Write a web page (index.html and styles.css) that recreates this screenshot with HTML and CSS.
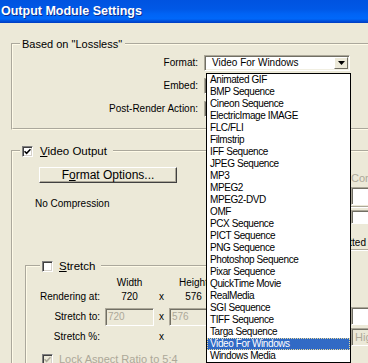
FILE: index.html
```html
<!DOCTYPE html>
<html lang="en">
<head>
<meta charset="utf-8">
<title>Output Module Settings</title>
<link rel="stylesheet" href="styles.css">
</head>
<body>
<div class="window">
  <div class="titlebar"><span class="title">Output Module Settings</span></div>
  <div class="client">
    <fieldset class="group group-based">
      <legend class="legend">Based on "Lossless"</legend>
      <div class="form-grid">
        <span class="lbl">Format:</span>
        <div class="combo-wrap">
          <div class="combo">
            <span class="combo-text">Video For Windows</span>
            <span class="combo-btn"><svg width="7" height="4" viewBox="0 0 7 4"><path d="M0 0H7L3.5 4Z" fill="#000"/></svg></span>
          </div>
          <ul class="droplist">
            <li>Animated GIF</li>
            <li>BMP Sequence</li>
            <li>Cineon Sequence</li>
            <li>ElectricImage IMAGE</li>
            <li>FLC/FLI</li>
            <li>Filmstrip</li>
            <li>IFF Sequence</li>
            <li>JPEG Sequence</li>
            <li>MP3</li>
            <li>MPEG2</li>
            <li>MPEG2-DVD</li>
            <li>OMF</li>
            <li>PCX Sequence</li>
            <li>PICT Sequence</li>
            <li>PNG Sequence</li>
            <li>Photoshop Sequence</li>
            <li>Pixar Sequence</li>
            <li>QuickTime Movie</li>
            <li>RealMedia</li>
            <li>SGI Sequence</li>
            <li>TIFF Sequence</li>
            <li>Targa Sequence</li>
            <li class="sel">Video For Windows</li>
            <li>Windows Media</li>
          </ul>
        </div>
        <span class="lbl">Embed:</span>
        <div class="combo"></div>
        <span class="lbl">Post-Render Action:</span>
        <div class="combo"></div>
      </div>
    </fieldset>

    <fieldset class="group group-video">
      <legend class="legend check-legend">
        <span class="check"><svg width="7" height="7" viewBox="0 0 7 7"><path d="M0.5 3.2L2.6 5.3L6.5 1.2" fill="none" stroke="#000" stroke-width="1.6"/></svg></span>
        <span><u>V</u>ideo Output</span>
      </legend>
      <div class="video-body">
        <div class="video-left">
          <button class="btn" type="button">F<u>o</u>rmat Options...</button>
          <div class="note">No Compression</div>
          <fieldset class="group group-stretch">
            <legend class="legend check-legend stretch-legend">
              <span class="check"></span>
              <span><u>S</u>tretch</span>
            </legend>
            <div class="stretch-grid">
              <span></span><span class="hdr">Width</span><span></span><span class="hdr">Height</span>
              <span class="slbl r2">Rendering at:</span><span class="val r2">720</span><span class="xs r2">x</span><span class="val r2">576</span>
              <span class="slbl r3">Stretch to:</span><span class="field">720</span><span class="xs r3">x</span><span class="field">576</span>
              <span class="slbl r4">Stretch %:</span><span></span><span class="xs r4">x</span><span></span>
            </div>
            <div class="lock-row">
              <span class="check check-dis"><svg width="7" height="7" viewBox="0 0 7 7"><path d="M0.5 3.2L2.6 5.3L6.5 1.2" fill="none" stroke="#ACA899" stroke-width="1.6"/></svg></span>
              <span class="dis-text">Lock Aspect Ratio to 5:4</span>
            </div>
          </fieldset>
        </div>
        <div class="video-right">
          <div class="rc-text">Compressor</div>
          <div class="rc-field"></div>
          <div class="rc-line"></div>
          <div class="rc-field rc-field2"></div>
          <div class="rc-text2">Unformatted</div>
          <div class="rc-line rc-line2"></div>
          <div class="rc-field rc-field3"></div>
          <div class="rc-field rc-field4">High</div>
        </div>
      </div>
    </fieldset>
  </div>
</div>
</body>
</html>
```
FILE: styles.css
```css
* { box-sizing: border-box; }
html, body { margin: 0; padding: 0; }
body {
  width: 368px;
  height: 363px;
  overflow: hidden;
  background: #ECE9D8;
  font-family: "Liberation Sans", Arial, sans-serif;
  font-size: 10px;
  color: #000;
}
.window { width: 368px; height: 363px; overflow: hidden; }

.titlebar {
  height: 23px;
  display: flex;
  align-items: center;
  padding: 0 0 1px 1px;
  background: linear-gradient(to bottom, #0053E0 0%, #0058E6 40%, #0063F5 60%, #0068FA 82%, #0050DC 91%, #003CC0 100%);
}
.title {
  font-weight: bold;
  font-size: 12.5px;
  color: #fff;
  text-shadow: 1px 1px 0 #0A2D8F;
}

.client { padding: 14px 0 0 11px; }

.group {
  border: 2px groove #FFFBE8;
  margin: 0;
  padding: 0;
  min-width: 0;
}
.legend {
  height: 14px;
  line-height: 14px;
  font-size: 11px;
  padding: 0 3px 0 2px;
  margin-left: 7px;
  white-space: nowrap;
}

.group-based { width: 400px; }
.form-grid {
  display: grid;
  grid-template-columns: 185px 146px;
  grid-auto-rows: 16px;
  column-gap: 6px;
  row-gap: 7px;
  padding: 4px 0 11px;
}
.lbl {
  justify-self: end;
  align-self: center;
  line-height: 12px;
}
.combo-wrap { position: relative; }
.combo {
  height: 16px;
  background: #fff;
  border: 1px solid;
  border-color: #ACA899 #fff #fff #ACA899;
  box-shadow: inset 1px 1px 0 #716F64, inset -1px -1px 0 #F1EFE2;
  display: flex;
  align-items: center;
}
.combo-text { padding-left: 7px; line-height: 12px; }
.combo-btn {
  margin-left: auto;
  margin-right: 1px;
  width: 14px;
  height: 12px;
  background: #ECE9D8;
  border: 1px solid;
  border-color: #fff #716F64 #716F64 #fff;
  display: flex;
  align-items: center;
  justify-content: center;
}
.droplist {
  position: absolute;
  top: 18px;
  left: 2px;
  width: 145px;
  margin: 0;
  padding: 0;
  list-style: none;
  background: #fff;
  border: 1px solid #000;
  z-index: 5;
}
.droplist li {
  height: 12px;
  line-height: 12px;
  padding-left: 3px;
  letter-spacing: -0.4px;
  white-space: nowrap;
}
.droplist li.sel {
  background: #316AC5;
  color: #fff;
  outline: 1px dotted #E9DA9A;
  outline-offset: -1px;
}

.group-video { width: 400px; height: 260px; margin-top: 14px; }
.check-legend {
  display: flex;
  align-items: center;
  gap: 7px;
  font-size: 11.5px;
  padding: 0 6px 0 2px;
}
.check {
  width: 11px;
  height: 11px;
  flex: none;
  background: #fff;
  border: 1px solid;
  border-color: #808080 #fff #fff #808080;
  box-shadow: inset 1px 1px 0 #404040, inset -1px -1px 0 #D4D0C8;
  display: flex;
  align-items: center;
  justify-content: center;
}
.check-dis { background: #ECE9D8; }

.video-body { display: flex; }
.video-left { width: 213px; flex: none; }
.btn {
  display: block;
  margin: 9px 0 0 26px;
  width: 138px;
  height: 16px;
  padding: 0;
  font-family: inherit;
  font-size: 12px;
  line-height: 12px;
  color: #000;
  background: #ECE9D8;
  border: 1px solid;
  border-color: #fff #404040 #404040 #fff;
  box-shadow: inset -1px -1px 0 #ACA899;
}
.note { margin: 15px 0 0 22px; line-height: 12px; }

.group-stretch { width: 200px; height: 120px; margin: 49px 0 0 12px; }
.stretch-legend { margin-left: 13px; gap: 6px; }
.stretch-grid {
  display: grid;
  grid-template-columns: 78px 49px 15px 49px;
  grid-template-rows: 14px 17px 18px 17px;
  margin-top: 4px;
  line-height: 12px;
}
.hdr { justify-self: center; align-self: start; }
.slbl { justify-self: end; padding-right: 5px; }
.val { justify-self: center; }
.xs { justify-self: center; }
.r2 { align-self: start; }
.r3 { align-self: center; }
.r4 { align-self: end; }
.field {
  height: 18px;
  border: 1px solid;
  border-color: #ACA899 #fff #fff #ACA899;
  box-shadow: inset 1px 1px 0 #716F64;
  background: #ECE9D8;
  color: #ACA899;
  padding-left: 2px;
  line-height: 16px;
}
.lock-row { display: flex; align-items: center; gap: 6px; margin: 10px 0 0 15px; }
.dis-text { color: #ACA899; font-size: 11px; line-height: 12px; }

.video-right { margin-left: 125px; width: 40px; flex: none; }
.rc-text { margin-top: 14px; line-height: 12px; color: #ACA899; font-size: 11px; }
.rc-field {
  margin-top: 3px;
  height: 18px;
  background: #fff;
  border: 1px solid;
  border-color: #ACA899 #fff #fff #ACA899;
  box-shadow: inset 1px 1px 0 #716F64;
}
.rc-line { margin-top: 1px; height: 2px; border-top: 1px solid #ACA899; border-bottom: 1px solid #fff; }
.rc-field2 { margin-top: 2px; height: 14px; }
.rc-text2 {
  margin: 13px 0 0 -60px;
  width: 75px;
  text-align: right;
  line-height: 12px;
  white-space: nowrap;
}
.rc-line2 { margin-top: 0; }
.rc-field3 { margin-top: 56px; }
.rc-field4 { margin-top: 3px; color: #ACA899; padding-left: 3px; line-height: 16px; font-size: 11px; background: #ECE9D8; }
```
